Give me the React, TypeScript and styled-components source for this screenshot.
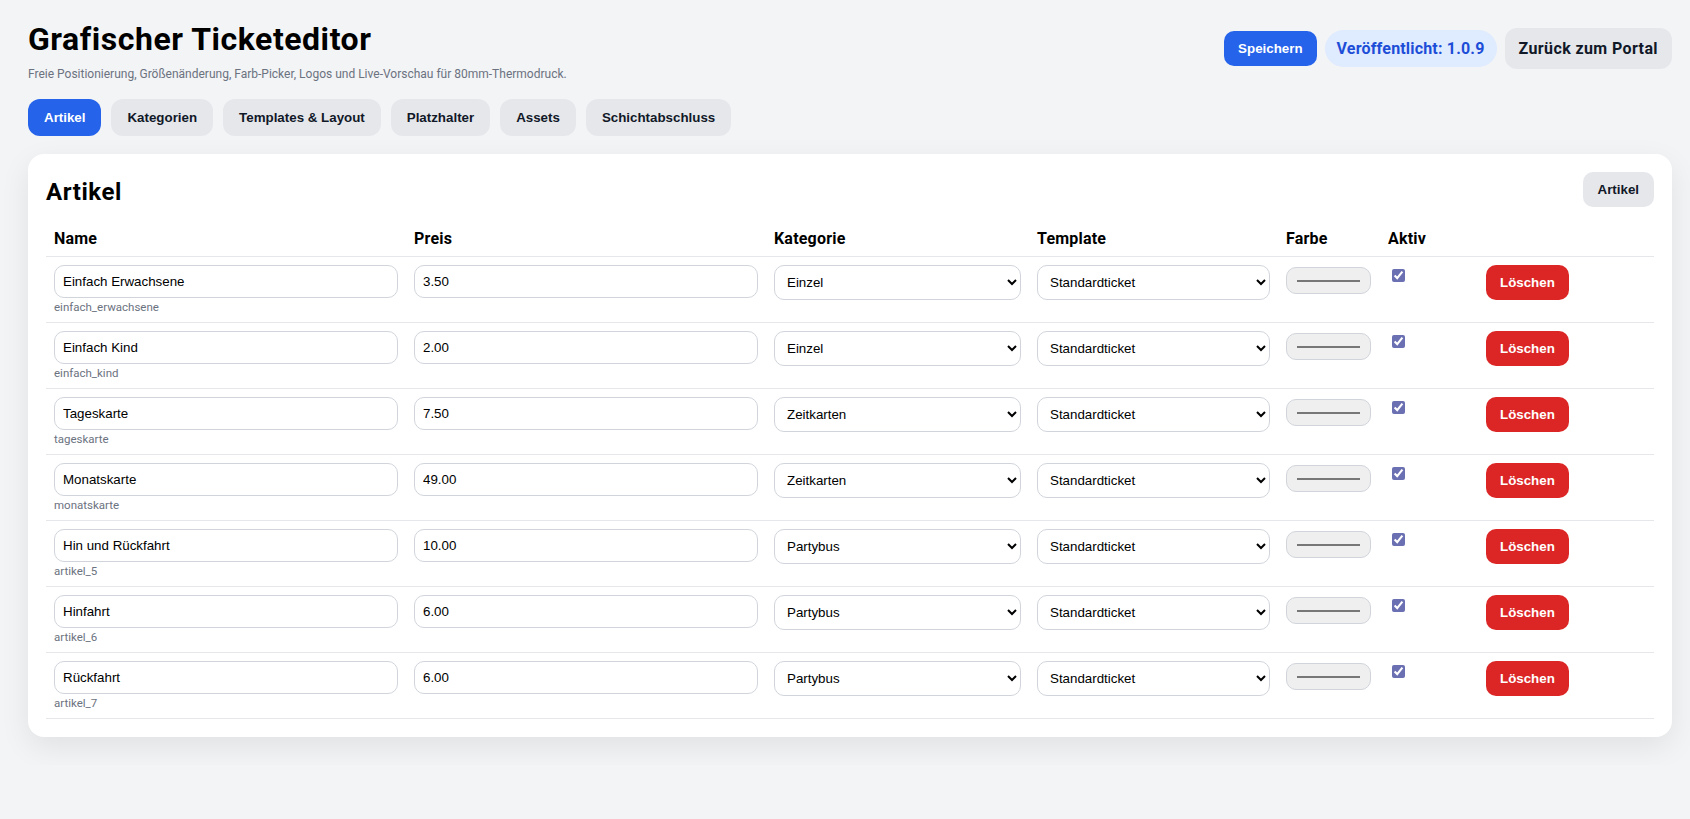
import { createGlobalStyle } from "styled-components";
import styled from "styled-components";

const GlobalStyle = createGlobalStyle`
  html, body {
    margin: 0;
    min-height: 100%;
    background: #f3f4f6;
    color: #000;
    font-family: Roboto, "Noto Sans", sans-serif;
  }
  * {
    box-sizing: border-box;
  }
`;

const Page = styled.div`
  padding: 20px 18px 28px 28px;
`;

const TopBar = styled.header`
  display: flex;
  justify-content: space-between;
  align-items: flex-start;
`;

const Title = styled.h1`
  margin: 0;
  font-size: 32px;
  line-height: 38px;
  font-weight: 700;
  letter-spacing: 0.54px;
`;

const Subtitle = styled.p`
  margin: 8px 0 0;
  font-size: 12px;
  line-height: 16px;
  color: #6b7280;
`;

const TopActions = styled.div`
  display: flex;
  align-items: center;
  gap: 8px;
  margin-top: 8px;
`;

const Button = styled.button<{ $tone?: "primary" | "danger" | "muted" }>`
  height: 35px;
  padding: 0 ${(p) => (p.$tone ? "14px" : "15px")};
  border: 0;
  border-radius: 10px;
  font-family: "Liberation Sans", Arial, sans-serif;
  font-size: 13.33px;
  font-weight: 700;
  cursor: pointer;
  color: ${(p) => (p.$tone === "primary" || p.$tone === "danger" ? "#fff" : "#111827")};
  background: ${(p) =>
    p.$tone === "primary" ? "#2563eb" : p.$tone === "danger" ? "#dc2626" : "#e5e7eb"};
`;

const VersionPill = styled.span`
  height: 37px;
  padding: 0 12px;
  display: flex;
  align-items: center;
  border-radius: 999px;
  background: #dfebff;
  color: #1d4ed8;
  font-size: 16px;
  font-weight: 700;
  letter-spacing: 0.18px;
`;

const PortalLink = styled.a`
  height: 41px;
  padding: 0 14px;
  display: flex;
  align-items: center;
  border-radius: 12px;
  background: #e5e7eb;
  color: #111827;
  font-size: 16px;
  font-weight: 700;
  letter-spacing: 0.39px;
`;

const Tabs = styled.nav`
  display: flex;
  gap: 10px;
  margin-top: 17px;
`;

const Tab = styled(Button)`
  height: 37px;
  padding: 0 16px;
  border-radius: 12px;
`;

const Card = styled.section`
  margin-top: 18px;
  padding: 18px;
  background: #fff;
  border-radius: 16px;
  box-shadow: 0 10px 30px rgba(0, 0, 0, 0.08);
`;

const CardHead = styled.div`
  display: flex;
  justify-content: space-between;
  align-items: center;
  margin-bottom: 14px;
`;

const CardTitle = styled.h2`
  margin: 5px 0 0;
  font-size: 24px;
  font-weight: 700;
  letter-spacing: 0.6px;
`;

const Table = styled.table`
  width: 100%;
  border-collapse: collapse;
  table-layout: fixed;
`;

const HeadCell = styled.th`
  padding: 8px;
  height: 35px;
  vertical-align: bottom;
  border-bottom: 1px solid #e5e7eb;
  text-align: left;
  font-size: 16px;
  line-height: 19px;
  font-weight: 700;
  letter-spacing: 0.2px;
`;

const Cell = styled.td`
  padding: 8px;
  height: 66px;
  vertical-align: top;
  border-bottom: 1px solid #e5e7eb;
`;

const TextInput = styled.input`
  display: block;
  width: 100%;
  height: 33px;
  padding: 8px;
  border: 1px solid #d1d5db;
  border-radius: 10px;
  background: #fff;
  color: #000;
  font-family: "Liberation Sans", Arial, sans-serif;
  font-size: 13.33px;
`;

const Code = styled.div`
  margin-top: 2px;
  font-size: 11.5px;
  line-height: 14px;
  color: #6b7280;
`;

const Select = styled.select`
  display: block;
  width: 100%;
  height: 35px;
  padding: 8px;
  border: 1px solid #d1d5db;
  border-radius: 10px;
  background: #fff;
  color: #000;
  font-family: "Liberation Sans", Arial, sans-serif;
  font-size: 13.33px;
`;

const ColorInput = styled.input`
  display: block;
  width: 85px;
  height: 27px;
  margin-top: 2px;
  padding: 8px 8px 7px;
  border: 1px solid #d1d5db;
  border-radius: 10px;
  background: #efefef;

  &::-webkit-color-swatch {
    border: 1px solid #777;
  }
`;

const ActiveBox = styled.input`
  margin: 4px 3px 3px 4px;
  accent-color: #6b70b2;
`;

const columns = [360, 360, 263, 249, 102, 98, 176];
const headers = ["Name", "Preis", "Kategorie", "Template", "Farbe", "Aktiv", ""];

const articles = [
  { name: "Einfach Erwachsene", code: "einfach_erwachsene", price: "3.50", category: "Einzel" },
  { name: "Einfach Kind", code: "einfach_kind", price: "2.00", category: "Einzel" },
  { name: "Tageskarte", code: "tageskarte", price: "7.50", category: "Zeitkarten" },
  { name: "Monatskarte", code: "monatskarte", price: "49.00", category: "Zeitkarten" },
  { name: "Hin und Rückfahrt", code: "artikel_5", price: "10.00", category: "Partybus" },
  { name: "Hinfahrt", code: "artikel_6", price: "6.00", category: "Partybus" },
  { name: "Rückfahrt", code: "artikel_7", price: "6.00", category: "Partybus" },
];

const tabs = ["Artikel", "Kategorien", "Templates & Layout", "Platzhalter", "Assets", "Schichtabschluss"];

export default function App() {
  return (
    <Page>
      <GlobalStyle />
      <TopBar>
        <div>
          <Title>Grafischer Ticketeditor</Title>
          <Subtitle>Freie Positionierung, Größenänderung, Farb-Picker, Logos und Live-Vorschau für 80mm-Thermodruck.</Subtitle>
        </div>
        <TopActions>
          <Button $tone="primary">Speichern</Button>
          <VersionPill>Veröffentlicht: 1.0.9</VersionPill>
          <PortalLink>Zurück zum Portal</PortalLink>
        </TopActions>
      </TopBar>
      <Tabs>
        {tabs.map((tab, idx) => (
          <Tab key={tab} $tone={idx === 0 ? "primary" : "muted"}>
            {tab}
          </Tab>
        ))}
      </Tabs>
      <Card>
        <CardHead>
          <CardTitle>Artikel</CardTitle>
          <Button>Artikel</Button>
        </CardHead>
        <Table>
          <colgroup>
            {columns.map((width, idx) => (
              <col key={idx} width={width} />
            ))}
          </colgroup>
          <thead>
            <tr>
              {headers.map((label, idx) => (
                <HeadCell key={idx}>{label}</HeadCell>
              ))}
            </tr>
          </thead>
          <tbody>
            {articles.map((item) => (
              <tr key={item.code}>
                <Cell>
                  <TextInput defaultValue={item.name} />
                  <Code>{item.code}</Code>
                </Cell>
                <Cell>
                  <TextInput defaultValue={item.price} />
                </Cell>
                <Cell>
                  <Select defaultValue={item.category}>
                    <option>Einzel</option>
                    <option>Zeitkarten</option>
                    <option>Partybus</option>
                  </Select>
                </Cell>
                <Cell>
                  <Select defaultValue="Standardticket">
                    <option>Standardticket</option>
                  </Select>
                </Cell>
                <Cell>
                  <ColorInput type="color" defaultValue="#777777" />
                </Cell>
                <Cell>
                  <ActiveBox type="checkbox" defaultChecked />
                </Cell>
                <Cell>
                  <Button $tone="danger">Löschen</Button>
                </Cell>
              </tr>
            ))}
          </tbody>
        </Table>
      </Card>
    </Page>
  );
}
